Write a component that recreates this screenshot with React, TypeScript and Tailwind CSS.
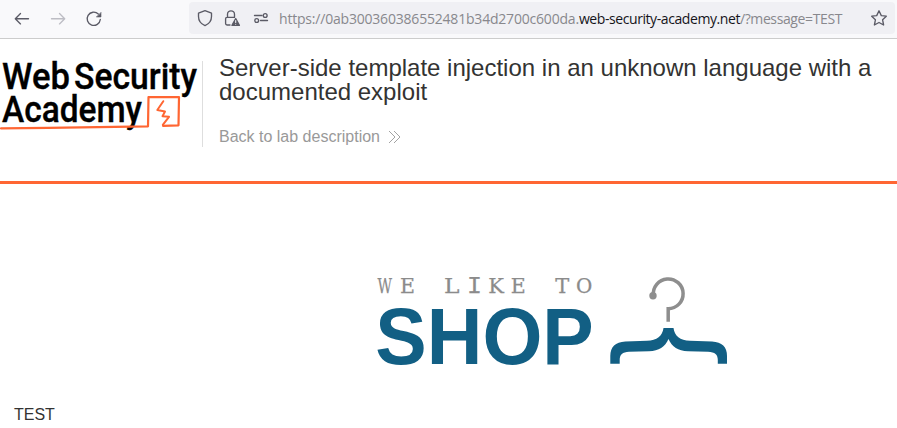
import React from 'react';

function Toolbar() {
  return (
    <div className="flex h-[39px] items-start border-b border-[#cccccc] bg-[#f9f9fb]">
      <svg className="h-[38px] w-[189px] shrink-0" viewBox="0 0 189 38" fill="none" strokeLinecap="round" strokeLinejoin="round" strokeWidth="1.35">
        <path d="M28.5 18.7H15.5M20.5 13.5L15.3 18.7L20.5 23.9" stroke="#5b5b66" />
        <path d="M51.5 18.7H64.5M59.5 13.5L64.7 18.7L59.5 23.9" stroke="#bdbdc4" />
        <path d="M98.3 14A6.6 6.6 0 1 0 100.3 19.5" stroke="#5b5b66" />
        <path d="M101 12.7V17H96.7Z" fill="#5b5b66" stroke="#5b5b66" strokeWidth="0.6" />
      </svg>
      <div className="mt-[2px] flex h-8 w-[706px] rounded bg-[#f0f0f4]">
        <svg className="h-8 w-[90px] shrink-0" viewBox="189 2 90 32" fill="none" stroke="#5b5b66" strokeWidth="1.35" strokeLinejoin="round" strokeLinecap="round">
          <path d="M205 10.7L211.5 13.2V16.6C211.5 20.8 209 24 205 25.6C201 24 198.5 20.8 198.5 16.6V13.2Z" />
          <path d="M230 25H227A1.4 1.4 0 0 1 225.6 23.6V18.8A1.4 1.4 0 0 1 227 17.4H234.5M227.5 17.2V14.3A3.5 3.5 0 0 1 234.5 14.3V17.2" />
          <path d="M235.7 18.7L239.4 25.4H232Z" fill="#5b5b66" />
          <path d="M235.7 20.5V22.5M235.7 24.2V24.3" stroke="#f0f0f4" strokeWidth="1.1" />
          <path d="M254.5 15.5H262M260.5 20.5H267.5" />
          <circle cx="265.2" cy="15.5" r="1.9" />
          <circle cx="256.7" cy="20.5" r="1.9" />
        </svg>
        <div className="mt-[7px] flex h-5 w-[563px] shrink-0 whitespace-nowrap font-['Open_Sans','Noto_Sans',sans-serif] text-[14px] leading-5 text-[#88888d]">
          <span className="w-[300px] tracking-[-0.2px]">https://0ab300360386552481b34d2700c600da.</span>
          <span className="w-[161px] tracking-[-0.42px] text-[#15141a]">web-security-academy.net</span>
          <span className="tracking-[-0.38px]">/?message=TEST</span>
        </div>
        <svg className="ml-[28px] h-8 w-5" viewBox="870 2 20 32" fill="none" stroke="#5b5b66" strokeWidth="1.35" strokeLinejoin="round">
          <path d="M879 10.8L881.3 15.6L886.3 16.2L882.6 19.8L883.6 25L879 22.5L874.4 25L875.4 19.8L871.7 16.2L876.7 15.6Z" />
        </svg>
      </div>
    </div>
  );
}

function AcademyLogo() {
  return (
    <svg className="h-[100px] w-[202px] shrink-0 overflow-visible" viewBox="0 50 202 100">
      <g className="font-[Roboto,sans-serif] font-medium" fill="#000" stroke="#000" strokeWidth="0.35" fontSize="37.5">
        <text x="2" y="89.3" textLength="68" lengthAdjust="spacingAndGlyphs">Web</text>
        <text x="74" y="89.3" textLength="123" lengthAdjust="spacingAndGlyphs">Security</text>
        <text x="2" y="122" textLength="140" lengthAdjust="spacingAndGlyphs">Academy</text>
      </g>
      <g fill="none" stroke="#ff6633" strokeLinejoin="round" strokeLinecap="round">
        <path d="M1 128.3C50 127.8 90 127.5 148 126.3L148.5 97L179 97.2L178.5 125.3L163 125.8" strokeWidth="2.2" />
        <path d="M163.3 101.2L157.3 110L165 111.5L162.5 116.2L169 116.8L162.8 124.8" strokeWidth="2" />
      </g>
    </svg>
  );
}

const tagline = [
  { letter: 'W', x: 377.5, width: 14.5 },
  { letter: 'E', x: 400, width: 15 },
  { letter: 'L', x: 444, width: 15.5 },
  { letter: 'K', x: 488.3, width: 15.7 },
  { letter: 'E', x: 510.8, width: 15 },
  { letter: 'T', x: 555.3, width: 14 },
  { letter: 'O', x: 576, width: 16.3 },
];

function ShopLogo() {
  return (
    <svg className="ml-[365px] mt-[81px] block h-[110px] w-[375px] overflow-visible" viewBox="365 265 375 110">
      <g className="font-['DejaVu_Serif',serif]" fontSize="21" fill="#8b8b8b" stroke="#8b8b8b" strokeWidth="0.25">
        {tagline.slice(0, 3).map(({ letter, x, width }) => (
          <text key={x} x={x} y="292.8" textLength={width} lengthAdjust="spacingAndGlyphs">{letter}</text>
        ))}
        <text x="467" y="292.8" fontSize="23.3" textLength="15" lengthAdjust="spacingAndGlyphs" className="font-['Liberation_Mono',monospace]">I</text>
        {tagline.slice(3).map(({ letter, x, width }) => (
          <text key={x} x={x} y="292.8" textLength={width} lengthAdjust="spacingAndGlyphs">{letter}</text>
        ))}
      </g>
      <text x="375.3" y="364" textLength="218.5" lengthAdjust="spacingAndGlyphs" fontSize="80.3" fill="#125f84" className="font-['Liberation_Sans',sans-serif] font-bold">SHOP</text>
      <path d="M653.4 295.5A14.9 14.9 0 1 1 668.2 308.7V321.7" fill="none" stroke="#8e8e8e" strokeWidth="3.5" />
      <circle cx="653" cy="295.7" r="3.7" fill="#8e8e8e" />
      <path d="M663.5 328H673.5C674.5 336 680 340.5 690 340.8L712 341.5C722 342 727 347 727 356V363.7H717.8V360C717.8 354.5 715 352 708 351.7L688 351.3C678 350.8 672 347 668.5 339C665 347 659 350.8 649 351.3L629 351.7C622.5 352 619.7 354.5 619.7 360V363.7H610.3V356C610.3 347 615.3 342 625.3 341.5L647 340.8C657 340.5 662.5 336 663.5 328Z" fill="#125f84" />
    </svg>
  );
}

export default function App() {
  return (
    <main className="h-[428px] w-[897px] overflow-hidden bg-white font-['Liberation_Sans',Arial,sans-serif]">
      <Toolbar />
      <header className="flex h-[145px] border-b-[3px] border-[#ff6633] pt-[11px]">
        <AcademyLogo />
        <div className="mt-[11px] h-[86px] w-px shrink-0 bg-[#dedede]" />
        <div className="ml-4 pt-[6px]">
          <h1 className="w-[670px] text-[24px] leading-6 text-[#333332]">Server-side template injection in an unknown language with a documented exploit</h1>
          <a className="mt-[23px] flex items-center text-[16px] leading-5 text-[#999999]">
            Back to lab description
            <svg className="ml-2 h-4 w-4" viewBox="0 0 16 16" fill="none" stroke="#999999" strokeWidth="0.9">
              <path d="M1 2L7 8L1 14M6 2L12 8L6 14" />
            </svg>
          </a>
        </div>
      </header>
      <ShopLogo />
      <p className="ml-[14px] mt-[30px] text-[16px] leading-5 text-[#333332]">TEST</p>
    </main>
  );
}
